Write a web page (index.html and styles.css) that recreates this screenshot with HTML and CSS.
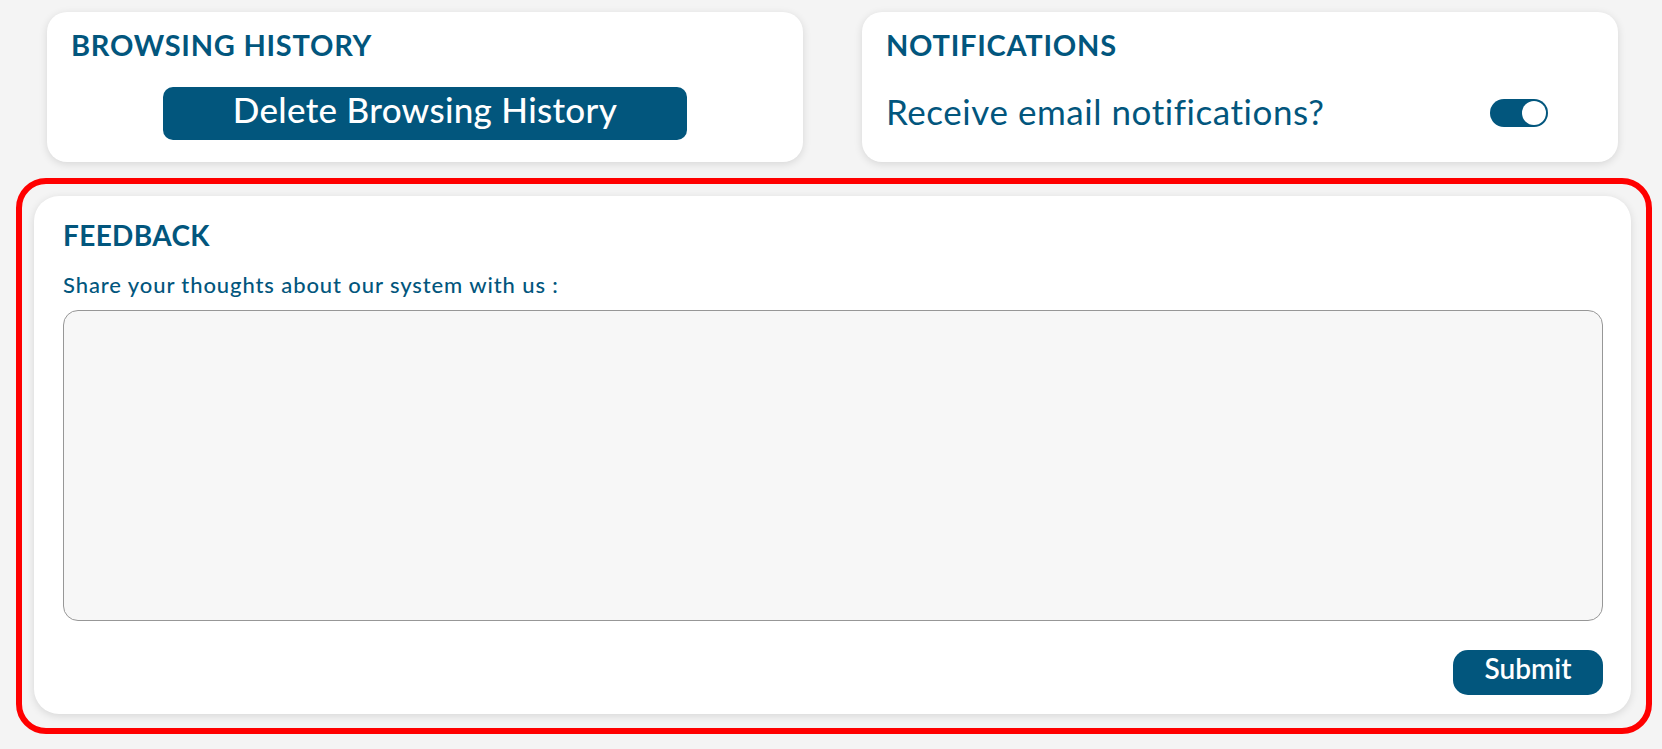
FILE: index.html
```html
<!DOCTYPE html>
<html lang="en">
<head>
<meta charset="utf-8">
<title>Settings</title>
<link rel="stylesheet" href="styles.css">
</head>
<body>
  <div class="top-row">
    <section class="card card-history">
      <h2 class="card-title">BROWSING HISTORY</h2>
      <div class="btn-wrap">
        <button class="btn-delete" type="button">Delete Browsing History</button>
      </div>
    </section>
    <section class="card card-notify">
      <h2 class="card-title">NOTIFICATIONS</h2>
      <div class="notify-row">
        <span class="notify-label">Receive email notifications?</span>
        <span class="toggle"><span class="toggle-knob"></span></span>
      </div>
    </section>
  </div>

  <div class="highlight">
    <section class="card card-feedback">
      <h2 class="card-title feedback-title">FEEDBACK</h2>
      <label class="feedback-label" for="fb">Share your thoughts about our system with us :</label>
      <textarea id="fb" class="feedback-input"></textarea>
      <div class="submit-row">
        <button class="btn-submit" type="button">Submit</button>
      </div>
    </section>
  </div>
</body>
</html>
```

FILE: styles.css
```css
* {
  box-sizing: border-box;
}

body {
  margin: 0;
  background: #f4f4f4;
  font-family: "Lato", "Noto Sans", sans-serif;
  color: #02567d;
}

.top-row {
  display: grid;
  grid-template-columns: 756px 756px;
  column-gap: 59px;
  padding: 12px 0 0 47px;
}

.card {
  background: #ffffff;
  border-radius: 20px;
  box-shadow: 0 2px 8px rgba(0, 0, 0, 0.12);
}

.card-history {
  padding: 18px 24px 22px 24px;
  height: 150px;
}

.card-notify {
  padding: 18px 24px 20px 24px;
  height: 150px;
}

.card-title {
  margin: 0;
  font-size: 29px;
  line-height: 29px;
  font-weight: 700;
  letter-spacing: 0.75px;
  color: #02567d;
}

.btn-wrap {
  display: flex;
  justify-content: center;
  margin-top: 28px;
}

.btn-delete {
  width: 524px;
  height: 53px;
  border: none;
  border-radius: 10px;
  background: #02567d;
  color: #ffffff;
  font-family: "Lato", "Noto Sans", sans-serif;
  font-size: 35px;
  line-height: 35px;
  font-weight: 500;
  letter-spacing: 0.3px;
  padding: 5px 0 13px 0;
}

.notify-row {
  display: flex;
  align-items: center;
  justify-content: space-between;
  margin-top: 35px;
  padding-right: 46px;
}

.notify-label {
  font-size: 35px;
  line-height: 35px;
  letter-spacing: 0.55px;
}

.toggle {
  position: relative;
  display: block;
  width: 58px;
  height: 28px;
  border-radius: 14px;
  background: #02567d;
  margin-top: 2px;
}

.toggle-knob {
  position: absolute;
  top: 2px;
  right: 2px;
  width: 24px;
  height: 24px;
  border-radius: 50%;
  background: #ffffff;
}

.highlight {
  margin: 16px 10px 15px 16px;
  border: 6px solid #ff0000;
  border-radius: 30px;
  padding: 12px 15px 14px 12px;
}

.card-feedback {
  border-radius: 25px;
  padding: 25px 28px 19px 29px;
  display: flex;
  flex-direction: column;
}

.feedback-title {
  font-size: 28px;
  line-height: 28px;
  letter-spacing: 0.35px;
}

.feedback-label {
  display: block;
  margin-top: 25px;
  font-size: 22px;
  line-height: 22px;
  font-weight: 500;
  letter-spacing: 0.9px;
}

.feedback-input {
  display: block;
  width: 100%;
  height: 311px;
  margin-top: 14px;
  background: #f7f7f7;
  border: 1px solid #979797;
  border-radius: 15px;
  resize: none;
  outline: none;
}

.submit-row {
  display: flex;
  justify-content: flex-end;
  margin-top: 29px;
}

.btn-submit {
  width: 150px;
  height: 45px;
  border: none;
  border-radius: 15px;
  background: #02567d;
  color: #ffffff;
  font-family: "Lato", "Noto Sans", sans-serif;
  font-size: 28px;
  line-height: 28px;
  font-weight: 600;
  padding: 4px 0 13px 0;
}
```
